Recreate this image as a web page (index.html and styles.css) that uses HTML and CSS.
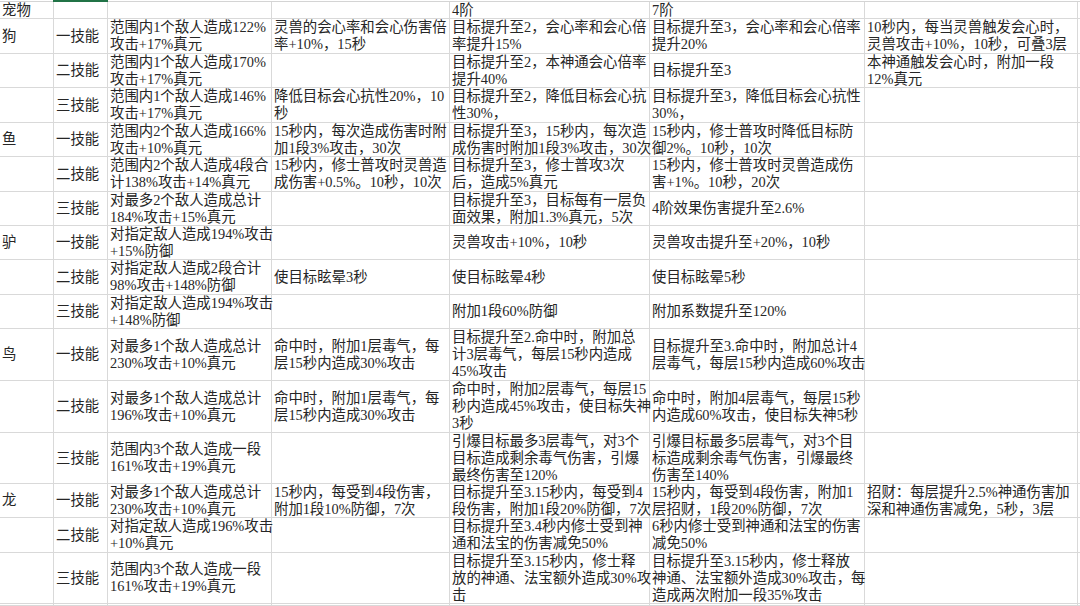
FILE: index.html
```html
<!DOCTYPE html>
<html lang="zh-CN">
<head>
<meta charset="utf-8">
<title>宠物技能</title>
<link rel="stylesheet" href="styles.css">
</head>
<body>
<div class="topstrip"><div class="ts-a"></div><div class="ts-b"></div><div class="ts-rest"></div></div>
<div class="sheet">
  <div class="c">宠物</div><div class="c"></div><div class="c"></div><div class="c"></div><div class="c">4阶</div><div class="c">7阶</div><div class="c"></div><div class="c"></div>

  <div class="c">狗</div><div class="c">一技能</div><div class="c">范围内1个敌人造成122%<br>攻击+17%真元</div><div class="c">灵兽的会心率和会心伤害倍<br>率+10%，15秒</div><div class="c">目标提升至2，会心率和会心倍<br>率提升15%</div><div class="c">目标提升至3，会心率和会心倍率<br>提升20%</div><div class="c">10秒内，每当灵兽触发会心时，<br>灵兽攻击+10%，10秒，可叠3层</div><div class="c"></div>

  <div class="c"></div><div class="c">二技能</div><div class="c">范围内1个敌人造成170%<br>攻击+17%真元</div><div class="c"></div><div class="c">目标提升至2，本神通会心倍率<br>提升40%</div><div class="c">目标提升至3</div><div class="c">本神通触发会心时，附加一段<br>12%真元</div><div class="c"></div>

  <div class="c"></div><div class="c">三技能</div><div class="c">范围内1个敌人造成146%<br>攻击+17%真元</div><div class="c">降低目标会心抗性20%，10<br>秒</div><div class="c">目标提升至2，降低目标会心抗<br>性30%，</div><div class="c">目标提升至3，降低目标会心抗性<br>30%，</div><div class="c"></div><div class="c"></div>

  <div class="c">鱼</div><div class="c">一技能</div><div class="c">范围内2个敌人造成166%<br>攻击+10%真元</div><div class="c">15秒内，每次造成伤害时附<br>加1段3%攻击，30次</div><div class="c">目标提升至3，15秒内，每次造<br>成伤害时附加1段3%攻击，30次</div><div class="c">15秒内，修士普攻时降低目标防<br>御2%。10秒，10次</div><div class="c"></div><div class="c"></div>

  <div class="c"></div><div class="c">二技能</div><div class="c">范围内2个敌人造成4段合<br>计138%攻击+14%真元</div><div class="c">15秒内，修士普攻时灵兽造<br>成伤害+0.5%。10秒，10次</div><div class="c">目标提升至3，修士普攻3次<br>后，造成5%真元</div><div class="c">15秒内，修士普攻时灵兽造成伤<br>害+1%。10秒，20次</div><div class="c"></div><div class="c"></div>

  <div class="c"></div><div class="c">三技能</div><div class="c">对最多2个敌人造成总计<br>184%攻击+15%真元</div><div class="c"></div><div class="c">目标提升至3，目标每有一层负<br>面效果，附加1.3%真元，5次</div><div class="c">4阶效果伤害提升至2.6%</div><div class="c"></div><div class="c"></div>

  <div class="c">驴</div><div class="c">一技能</div><div class="c">对指定敌人造成194%攻击<br>+15%防御</div><div class="c"></div><div class="c">灵兽攻击+10%，10秒</div><div class="c">灵兽攻击提升至+20%，10秒</div><div class="c"></div><div class="c"></div>

  <div class="c"></div><div class="c">二技能</div><div class="c">对指定敌人造成2段合计<br>98%攻击+148%防御</div><div class="c">使目标眩晕3秒</div><div class="c">使目标眩晕4秒</div><div class="c">使目标眩晕5秒</div><div class="c"></div><div class="c"></div>

  <div class="c"></div><div class="c">三技能</div><div class="c">对指定敌人造成194%攻击<br>+148%防御</div><div class="c"></div><div class="c">附加1段60%防御</div><div class="c">附加系数提升至120%</div><div class="c"></div><div class="c"></div>

  <div class="c">鸟</div><div class="c">一技能</div><div class="c">对最多1个敌人造成总计<br>230%攻击+10%真元</div><div class="c">命中时，附加1层毒气，每<br>层15秒内造成30%攻击</div><div class="c">目标提升至2.命中时，附加总<br>计3层毒气，每层15秒内造成<br>45%攻击</div><div class="c">目标提升至3.命中时，附加总计4<br>层毒气，每层15秒内造成60%攻击</div><div class="c"></div><div class="c"></div>

  <div class="c"></div><div class="c">二技能</div><div class="c">对最多1个敌人造成总计<br>196%攻击+10%真元</div><div class="c">命中时，附加1层毒气，每<br>层15秒内造成30%攻击</div><div class="c">命中时，附加2层毒气，每层15<br>秒内造成45%攻击，使目标失神<br>3秒</div><div class="c">命中时，附加4层毒气，每层15秒<br>内造成60%攻击，使目标失神5秒</div><div class="c"></div><div class="c"></div>

  <div class="c"></div><div class="c">三技能</div><div class="c">范围内3个敌人造成一段<br>161%攻击+19%真元</div><div class="c"></div><div class="c">引爆目标最多3层毒气，对3个<br>目标造成剩余毒气伤害，引爆<br>最终伤害至120%</div><div class="c">引爆目标最多5层毒气，对3个目<br>标造成剩余毒气伤害，引爆最终<br>伤害至140%</div><div class="c"></div><div class="c"></div>

  <div class="c">龙</div><div class="c">一技能</div><div class="c">对最多1个敌人造成总计<br>230%攻击+10%真元</div><div class="c">15秒内，每受到4段伤害，<br>附加1段10%防御，7次</div><div class="c">目标提升至3.15秒内，每受到4<br>段伤害，附加1段20%防御，7次</div><div class="c">15秒内，每受到4段伤害，附加1<br>层招财，1段20%防御，7次</div><div class="c">招财：每层提升2.5%神通伤害加<br>深和神通伤害减免，5秒，3层</div><div class="c"></div>

  <div class="c"></div><div class="c">二技能</div><div class="c">对指定敌人造成196%攻击<br>+10%真元</div><div class="c"></div><div class="c">目标提升至3.4秒内修士受到神<br>通和法宝的伤害减免50%</div><div class="c">6秒内修士受到神通和法宝的伤害<br>减免50%</div><div class="c"></div><div class="c"></div>

  <div class="c"></div><div class="c">三技能</div><div class="c">范围内3个敌人造成一段<br>161%攻击+19%真元</div><div class="c"></div><div class="c">目标提升至3.15秒内，修士释<br>放的神通、法宝额外造成30%攻<br>击</div><div class="c">目标提升至3.15秒内，修士释放<br>神通、法宝额外造成30%攻击，每<br>造成两次附加一段35%攻击</div><div class="c"></div><div class="c"></div>

  <div class="c"></div><div class="c"></div><div class="c"></div><div class="c"></div><div class="c"></div><div class="c"></div><div class="c"></div><div class="c"></div>
</div>
</body>
</html>
```

FILE: styles.css
```css
* { box-sizing: border-box; }
html, body {
  margin: 0;
  padding: 0;
  background: #ffffff;
  width: 1080px;
  height: 606px;
  overflow: hidden;
}
body {
  font-family: "Liberation Serif", "Noto Sans CJK SC", serif;
  font-size: 14.4px;
  color: #262626;
}
.topstrip {
  display: flex;
  height: 2px;
}
.ts-a { width: 53px; border-bottom: 1px solid #d4d4d4; }
.ts-b { width: 55px; background: #217346; }
.ts-rest { flex: 1; border-bottom: 1px solid #d4d4d4; }
.sheet {
  display: grid;
  grid-template-columns: 54px 54px 164px 178px 200px 215px 213px 1fr;
  grid-template-rows: 17px 35px 34px 35px 34px 35px 34px 34px 35px 34px 52px 52px 51px 34px 35px 51px 2px;
}
.c {
  border-right: 1px solid #d9d9d9;
  border-bottom: 1px solid #d9d9d9;
  display: flex;
  align-items: center;
  padding: 0 2px 0 2px;
  line-height: 17px;
  white-space: nowrap;
}
```
